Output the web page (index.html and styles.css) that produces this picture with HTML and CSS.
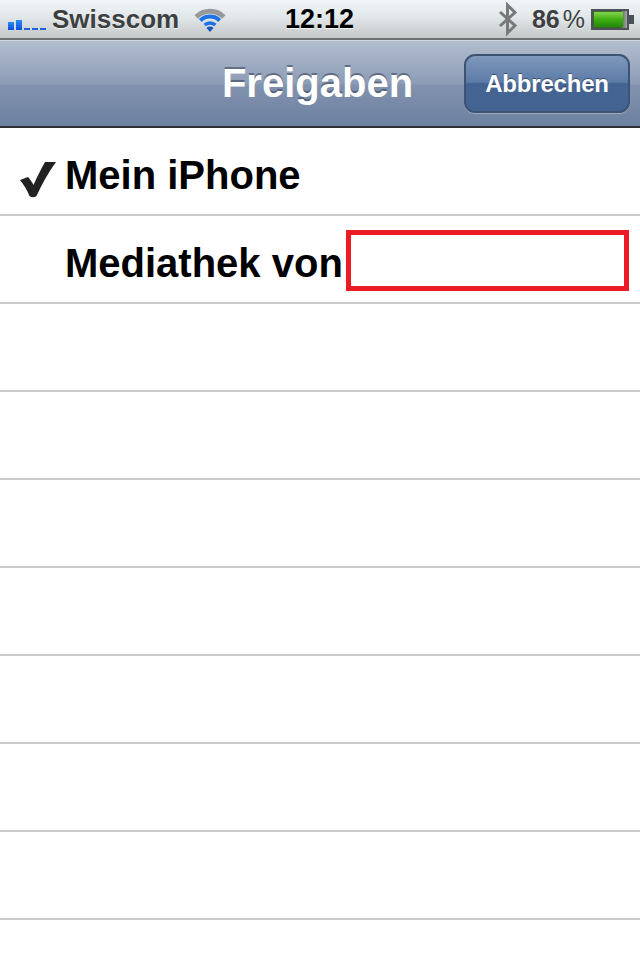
FILE: index.html
```html
<!doctype html>
<html lang="de">
  <head>
    <meta charset="UTF-8" />
    <meta name="viewport" content="width=device-width, initial-scale=1.0" />
    <title>Freigaben</title>
    <link rel="stylesheet" href="styles.css">
  </head>
  <body>
    <div class="screen">
      <!-- Status bar -->
      <div class="status-bar">
        <div class="status-left">
          <div class="signal">
            <span class="bar bar-1"></span>
            <span class="bar bar-2"></span>
            <span class="bar bar-dot"></span>
            <span class="bar bar-dot"></span>
            <span class="bar bar-dot"></span>
          </div>
          <span class="carrier">Swisscom</span>
          <svg class="wifi" width="32" height="24" viewBox="0 0 32 24">
            <path d="M2.2 9 A19.5 19.5 0 0 1 29.8 9" fill="none" stroke="#96989a" stroke-width="5"/>
            <path d="M6.3 12.5 A14 14 0 0 1 25.7 12.5" fill="none" stroke="#1c72e6" stroke-width="4"/>
            <path d="M10.6 17 A8 8 0 0 1 21.4 17" fill="none" stroke="#1c72e6" stroke-width="3.5"/>
            <path d="M12.5 20 A5 5 0 0 1 19.5 20 L16 24 Z" fill="#1556b8"/>
          </svg>
        </div>
        <div class="clock">12:12</div>
        <div class="status-right">
          <svg class="bluetooth" width="20" height="34" viewBox="0 0 20 34">
            <path d="M2 10 L17 23.5 L9.5 31 L9.5 3 L17 10.5 L2 24" fill="none" stroke="#77797b" stroke-width="3"/>
          </svg>
          <span class="battery-text">86<span class="percent">%</span></span>
          <div class="battery">
            <div class="battery-body"><div class="battery-fill"></div></div>
            <div class="battery-cap"></div>
          </div>
        </div>
      </div>

      <!-- Navigation bar -->
      <header class="nav-bar">
        <h1 class="nav-title">Freigaben</h1>
        <button class="cancel-btn">Abbrechen</button>
      </header>

      <!-- Source list -->
      <ul class="list">
        <li class="list-row">
          <svg class="check" width="36" height="36" viewBox="0 0 36 36">
            <path d="M0 18 L8 15 C10 17 12 20 13.5 23 C17 15 21 7 25 0 L36 0 C28 11 22 22 17 33 C16 36 10 36 9 33 C7 28 4 23 0 18 Z" fill="#222"/>
          </svg>
          <span class="row-label">Mein iPhone</span>
        </li>
        <li class="list-row">
          <span class="row-label">Mediathek von</span>
          <div class="redaction"></div>
        </li>
        <li class="list-row"></li>
        <li class="list-row"></li>
        <li class="list-row"></li>
        <li class="list-row"></li>
        <li class="list-row"></li>
        <li class="list-row"></li>
        <li class="list-row"></li>
        <li class="list-row"></li>
      </ul>
    </div>
  </body>
</html>
```

FILE: styles.css
```css
* {
  margin: 0;
  padding: 0;
  box-sizing: border-box;
}

body {
  font-family: "Liberation Sans", Arial, sans-serif;
  background: #fff;
}

.screen {
  width: 640px;
  height: 960px;
  overflow: hidden;
}

.status-bar {
  height: 40px;
  position: relative;
  display: flex;
  justify-content: space-between;
  align-items: center;
  padding: 0 6px 0 8px;
  background: linear-gradient(#f0f5f7 0%, #e2e7e9 45%, #c3c7c8 100%);
  border-bottom: 2px solid #6e7174;
}

.status-left {
  display: flex;
  align-items: center;
}

.signal {
  display: flex;
  align-items: flex-end;
  gap: 2px;
  width: 38px;
  height: 10px;
  margin-top: 11px;
}

.bar {
  width: 6px;
  background: linear-gradient(#2b8cf5, #0c50d8);
}

.bar-1 {
  height: 8px;
}

.bar-2 {
  height: 10px;
}

.bar-dot {
  height: 2px;
  background: #1b62dc;
}

.carrier {
  margin-left: 6px;
  font-size: 26px;
  font-weight: 700;
  color: #3d3f41;
  text-shadow: 0 1px 0 rgba(255, 255, 255, 0.7);
}

.wifi {
  margin-left: 15px;
  margin-top: 2px;
}

.clock {
  position: absolute;
  left: 285px;
  top: 4px;
  font-size: 27px;
  line-height: 30px;
  font-weight: 700;
  color: #000;
  text-shadow: 0 1px 0 rgba(255, 255, 255, 0.7);
}

.status-right {
  display: flex;
  align-items: center;
}

.bluetooth {
  margin-right: 14px;
}

.battery-text {
  font-size: 25px;
  font-weight: 700;
  color: #3d3f41;
  text-shadow: 0 1px 0 rgba(255, 255, 255, 0.7);
}

.percent {
  margin-left: 3px;
  font-weight: 400;
}

.battery {
  display: flex;
  align-items: center;
  margin-left: 6px;
}

.battery-body {
  width: 38px;
  height: 21px;
  padding: 1px;
  background: linear-gradient(90deg, #3d6a2a 80%, #a3a6a8 100%);
  border: 2px solid #4c5058;
}

.battery-fill {
  height: 100%;
  width: 90%;
  background: linear-gradient(#84d650 0%, #3fae10 50%, #23880a 100%);
}

.battery-cap {
  width: 5px;
  height: 9px;
  background: #4c5058;
}

.nav-bar {
  height: 88px;
  position: relative;
  display: flex;
  justify-content: center;
  align-items: center;
  background: linear-gradient(#b3bece 0%, #8c9cb6 50%, #8192ae 52%, #6c81a0 100%);
  border-top: 1px solid #cfd6df;
  border-bottom: 2px solid #2d3035;
}

.nav-title {
  margin-right: 5px;
  font-size: 40px;
  font-weight: 700;
  color: #fff;
  text-shadow: 0 -2px 0 rgba(50, 60, 80, 0.55);
}

.cancel-btn {
  position: absolute;
  left: 464px;
  top: 13px;
  width: 166px;
  height: 59px;
  font-family: inherit;
  font-size: 24px;
  font-weight: 700;
  letter-spacing: -0.2px;
  color: #fff;
  text-shadow: 0 -1px 0 rgba(30, 40, 60, 0.6);
  background: linear-gradient(#7f98bc 0%, #5b7ba6 48%, #446594 50%, #436493 100%);
  border: 2px solid #3e5272;
  border-radius: 11px;
  box-shadow: 0 1px 0 rgba(255, 255, 255, 0.3);
}

.list {
  list-style: none;
}

.list-row {
  height: 88px;
  position: relative;
  display: flex;
  align-items: center;
  padding-left: 65px;
  padding-top: 8px;
  border-bottom: 2px solid #cbcbcb;
}

.row-label {
  font-size: 40px;
  font-weight: 700;
  color: #000;
}

.check {
  position: absolute;
  left: 20px;
  top: 34px;
}

.redaction {
  position: absolute;
  left: 346px;
  top: 14px;
  width: 283px;
  height: 61px;
  border: 5px solid #ed1c24;
}
```
